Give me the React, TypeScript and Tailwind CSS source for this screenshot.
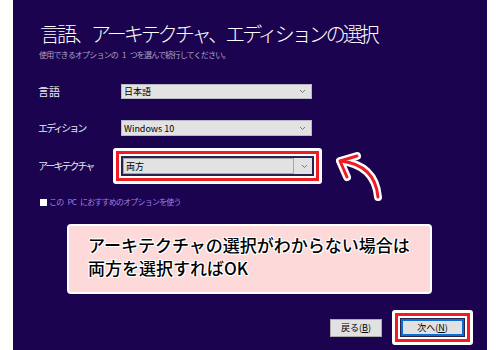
import React from 'react';

const jp = { fontFamily: '"Noto Sans CJK JP", "Noto Sans", sans-serif' };

const Chevron: React.FC = () => (
  <svg width="7" height="5" viewBox="0 0 7 5" className="shrink-0">
    <path d="M1 1 L3.5 3.5 L6 1" fill="none" stroke="#7a7a7a" strokeWidth="1" />
  </svg>
);

const Select: React.FC<{ value: string; h: string }> = ({ value, h }) => (
  <div className={`flex w-[191px] ${h} items-center justify-between border border-[#b9b9c6] bg-[#e2e2e2] pl-[2px] pr-[5px]`}>
    <span className="text-[9px] leading-none text-black">{value}</span>
    <Chevron />
  </div>
);

const App: React.FC = () => {
  return (
    <div className="relative h-[350px] w-[500px] bg-white px-[13px]" style={jp}>
      <div className="h-full bg-[#1c0350] pl-[25px] pt-[23px]">
        <h1 className="ml-[2px] text-[20px] font-light leading-[22px] tracking-[-3px] text-white">
          言語、アーキテクチャ、エディションの選択
        </h1>
        <p className="ml-[1px] mt-[5px] text-[8px] leading-[10px] tracking-[-0.8px] text-[#aaa2c6] [word-spacing:3px]">
          使用できるオプションの 1 つを選んで続行してください。
        </p>

        <div className="mt-[24px] flex items-center">
          <span className="w-[83px] text-[11px] leading-none text-[#ececf2]">言語</span>
          <Select value="日本語" h="h-[15px]" />
        </div>

        <div className="mt-[21px] flex items-center">
          <span className="w-[83px] text-[10px] leading-none tracking-[-2px] text-[#ececf2]">エディション</span>
          <Select value="Windows 10" h="h-[16px]" />
        </div>

        <div className="mt-[12px] flex items-center">
          <span className="w-[75px] text-[10px] leading-none tracking-[-2px] text-[#ececf2]">アーキテクチャ</span>
          <div className="rounded-[3px] border-[3px] border-white">
            <div className="border-[3px] border-[#f01c24] bg-white p-[2px]">
              <div className="flex h-[20px] w-[193px] items-center border-2 border-[#24244e] bg-[#e2e2e2] pr-[4px]">
                <div className="flex h-full flex-1 items-center border border-[#a8a8a8] pl-[2px]">
                  <span className="text-[9px] leading-none text-black">両方</span>
                </div>
                <div className="flex w-[14px] justify-end">
                  <Chevron />
                </div>
              </div>
            </div>
          </div>
        </div>

        <div className="ml-[2px] mt-[14px] flex items-center gap-[2px]">
          <span className="h-[7px] w-[7px] bg-white" />
          <span className="text-[8px] leading-none tracking-[-0.8px] text-[#9c7fe6] [word-spacing:3px]">この PC におすすめのオプションを使う</span>
        </div>

        <div className="ml-[29px] mt-[18px] h-[70px] w-[365px] rounded-[4px] border-2 border-white bg-[#fdd9d9] pl-[19px] pt-[7px]">
          <p className="text-[17px] font-medium leading-[23px] text-black [text-shadow:0_0_2px_#fff,0_0_2px_#fff,1px_1px_0_#fff,-1px_-1px_0_#fff,1px_-1px_0_#fff,-1px_1px_0_#fff]">
            アーキテクチャの選択がわからない場合は
            <br />
            両方を選択すればOK
          </p>
        </div>

        <div className="mt-[16px] flex items-center justify-end gap-[10px] pr-[14px]">
          <div className="flex h-[18px] w-[52px] items-center justify-center border border-[#adadad] bg-[#e1e1e1] text-[9px] leading-none text-black">
            戻る(<span className="underline">B</span>)
          </div>
          <div className="rounded-[3px] border-[3px] border-white">
            <div className="border-[3px] border-[#f01c24] bg-white p-[2px]">
              <div className="border border-[#24244e]">
                <div className="flex h-[17px] w-[63px] items-center justify-center border-2 border-[#0a6fd4] bg-[#e1e1e1] text-[9px] leading-none text-black">
                  次へ(<span className="underline">N</span>)
                </div>
              </div>
            </div>
          </div>
        </div>
      </div>

      <svg className="pointer-events-none absolute left-0 top-0" width="500" height="350" viewBox="0 0 500 350">
        <g fill="none" strokeLinecap="round" strokeLinejoin="round">
          <path d="M378 197 Q 375 165 341 161" stroke="#fff" strokeWidth="8" />
          <path d="M357 156 L340 161 L347 177" stroke="#fff" strokeWidth="8" />
          <path d="M378 197 Q 375 165 341 161" stroke="#f01c24" strokeWidth="3" />
          <path d="M357 156 L340 161 L347 177" stroke="#f01c24" strokeWidth="3" />
        </g>
      </svg>
    </div>
  );
};

export default App;
